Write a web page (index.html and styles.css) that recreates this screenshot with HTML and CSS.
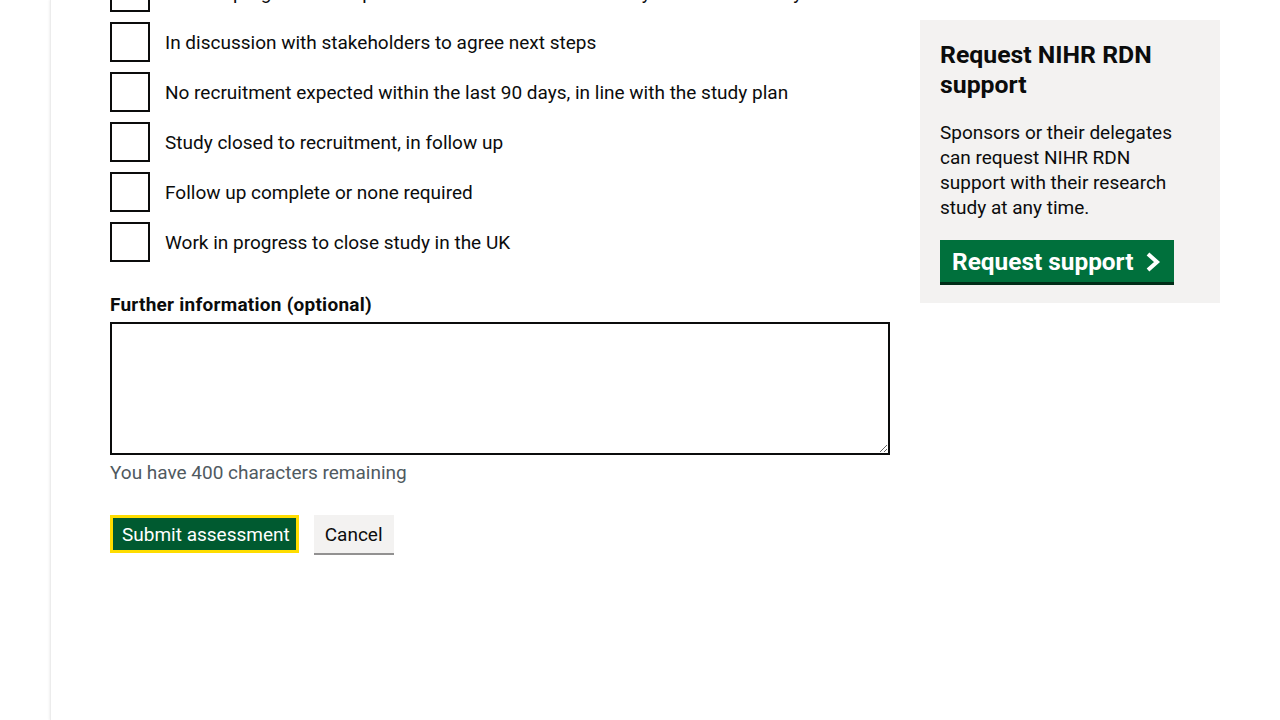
FILE: index.html
```html
<!DOCTYPE html>
<html lang="en">
<head>
<meta charset="utf-8">
<title>Assessment</title>
<link rel="stylesheet" href="styles.css">
</head>
<body>
<div class="page">
  <div class="layout">
    <main class="main">
      <div class="checkboxes">
        <label class="check"><input type="checkbox" class="check-input"><span class="check-label">Work in progress with sponsor to address reasons for any recruitment delay</span></label>
        <label class="check"><input type="checkbox" class="check-input"><span class="check-label">In discussion with stakeholders to agree next steps</span></label>
        <label class="check"><input type="checkbox" class="check-input"><span class="check-label">No recruitment expected within the last 90 days, in line with the study plan</span></label>
        <label class="check"><input type="checkbox" class="check-input"><span class="check-label">Study closed to recruitment, in follow up</span></label>
        <label class="check"><input type="checkbox" class="check-input"><span class="check-label">Follow up complete or none required</span></label>
        <label class="check"><input type="checkbox" class="check-input"><span class="check-label">Work in progress to close study in the UK</span></label>
      </div>
      <div class="field">
        <label class="field-label" for="info">Further information (optional)</label>
        <textarea id="info" class="textarea" rows="5"></textarea>
        <div class="hint">You have 400 characters remaining</div>
      </div>
      <div class="actions">
        <button class="btn btn-primary" type="button">Submit assessment</button>
        <button class="btn btn-secondary" type="button">Cancel</button>
      </div>
    </main>
    <aside class="side">
      <div class="side-box">
        <h2 class="side-title">Request NIHR RDN support</h2>
        <p class="side-text">Sponsors or their delegates can request NIHR RDN support with their research study at any time.</p>
        <a class="btn-start" href="#">Request support
          <svg class="chev" width="16" height="20" viewBox="0 0 16 20" aria-hidden="true"><path d="M3 2 L12 10 L3 18" fill="none" stroke="#fff" stroke-width="4"/></svg>
        </a>
      </div>
    </aside>
  </div>
</div>
</body>
</html>
```
FILE: styles.css
```css
html, body {
  margin: 0;
  padding: 0;
  background: #fff;
}
body {
  font-family: Roboto, "Liberation Sans", Arial, sans-serif;
  color: #0b0c0c;
  font-size: 19px;
  line-height: 25px;
  overflow: hidden;
  height: 720px;
}
.page {
  margin-left: 50px;
  min-height: 720px;
  border-left: 1px solid #ececec;
  box-shadow: -1px 0 2px rgba(0, 0, 0, 0.06);
  padding-left: 59px;
}
.layout {
  display: flex;
  gap: 30px;
  align-items: flex-start;
}
.main {
  width: 780px;
  margin-top: -28px;
}
.checkboxes {
  display: flex;
  flex-direction: column;
  gap: 10px;
}
.check {
  display: flex;
  align-items: center;
  gap: 15px;
  min-height: 40px;
}
.check-input {
  appearance: none;
  -webkit-appearance: none;
  margin: 0;
  width: 40px;
  height: 40px;
  border: 2px solid #0b0c0c;
  background: #fff;
  box-sizing: border-box;
  flex: none;
}
.check-label {
  font-size: 19px;
  line-height: 25px;
}
.field {
  margin-top: 30px;
}
.field-label {
  display: block;
  font-weight: 700;
  font-size: 19px;
  line-height: 25px;
  letter-spacing: 0.25px;
  margin-bottom: 5px;
}
.textarea {
  display: block;
  box-sizing: border-box;
  width: 100%;
  height: 133px;
  margin: 0;
  border: 2px solid #0b0c0c;
  border-radius: 0;
  padding: 5px;
  font-family: inherit;
  font-size: 19px;
}
.hint {
  margin-top: 5px;
  color: #505a5f;
  font-size: 19px;
  line-height: 25px;
}
.actions {
  margin-top: 30px;
  display: flex;
  gap: 15px;
  align-items: flex-start;
}
.btn {
  font-family: inherit;
  font-size: 19px;
  line-height: 20px;
  margin: 0;
  border-radius: 0;
  cursor: pointer;
  box-sizing: border-box;
}
.btn-primary {
  background: #005a30;
  color: #fff;
  border: 3px solid #ffdd00;
  padding: 7px 6px 5px 9px;
  height: 38px;
}
.btn-secondary {
  background: #f3f2f1;
  color: #0b0c0c;
  border: 0;
  padding: 10px 11px 8px;
  height: 38px;
  box-shadow: 0 2px 0 #929191;
}
.side {
  width: 300px;
  margin-top: 20px;
}
.side-box {
  background: #f3f2f1;
  padding: 20px 20px 21px;
}
.side-title {
  margin: 0;
  font-size: 24.8px;
  line-height: 30px;
  font-weight: 700;
}
.side-text {
  margin: 20px 0 20px;
  font-size: 19px;
  line-height: 25px;
}
.btn-start {
  display: inline-flex;
  align-items: center;
  gap: 12px;
  background: #00703c;
  color: #fff;
  text-decoration: none;
  font-weight: 700;
  font-size: 24.4px;
  line-height: 30px;
  padding: 7px 13px 5px 12px;
  box-shadow: 0 3px 0 #002d18;
}
.chev {
  display: block;
}
```
